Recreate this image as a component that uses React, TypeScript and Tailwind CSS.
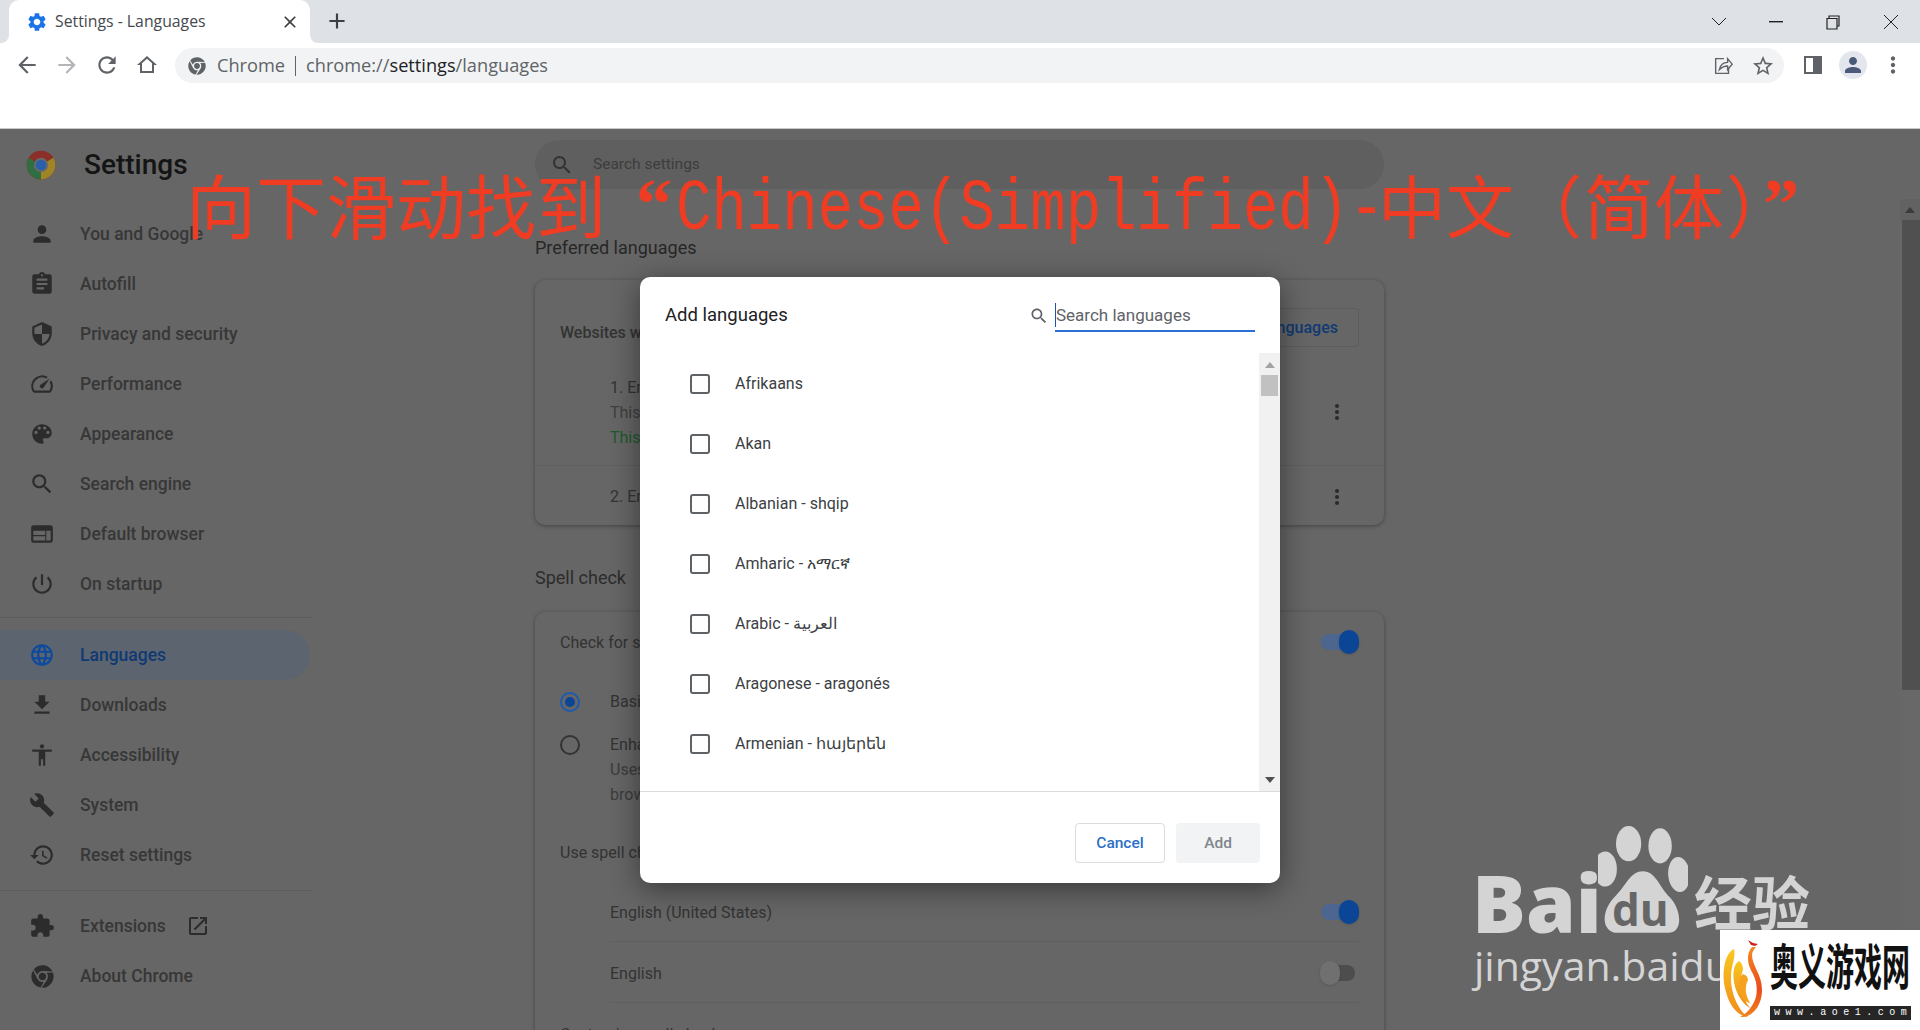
import { FaChrome } from "react-icons/fa";

const paths = {
  person: "M12 12c2.21 0 4-1.79 4-4s-1.79-4-4-4-4 1.79-4 4 1.79 4 4 4zm0 2c-2.67 0-8 1.34-8 4v2h16v-2c0-2.66-5.33-4-8-4z",
  assignment: "M19 3h-4.18C14.4 1.84 13.3 1 12 1c-1.3 0-2.4.84-2.82 2H5c-1.1 0-2 .9-2 2v14c0 1.1.9 2 2 2h14c1.1 0 2-.9 2-2V5c0-1.1-.9-2-2-2zm-7 0c.55 0 1 .45 1 1s-.45 1-1 1-1-.45-1-1 .45-1 1-1zm2 14H7v-2h7v2zm3-4H7v-2h10v2zm0-4H7V7h10v2z",
  security: "M12 1L3 5v6c0 5.55 3.84 10.74 9 12 5.16-1.26 9-6.45 9-12V5l-9-4zm0 10.99h7c-.53 4.12-3.28 7.79-7 8.94V12H5V6.3l7-3.11v8.8z",
  speed: "M20.38 8.57l-1.23 1.85a8 8 0 0 1-.22 7.58H5.07A8 8 0 0 1 15.58 6.85l1.85-1.23A10 10 0 0 0 3.35 19a2 2 0 0 0 1.72 1h13.85a2 2 0 0 0 1.74-1 10 10 0 0 0-.27-10.44zm-9.79 6.84a2 2 0 0 0 2.83 0l5.66-8.49-8.49 5.66a2 2 0 0 0 0 2.83z",
  palette: "M12 3c-4.97 0-9 4.03-9 9s4.03 9 9 9c.83 0 1.5-.67 1.5-1.5 0-.39-.15-.74-.39-1.01-.23-.26-.38-.61-.38-.99 0-.83.67-1.5 1.5-1.5H16c2.76 0 5-2.24 5-5 0-4.42-4.03-8-9-8zm-5.5 9c-.83 0-1.5-.67-1.5-1.5S5.67 9 6.5 9 8 9.67 8 10.5 7.33 12 6.5 12zm3-4C8.67 8 8 7.33 8 6.5S8.67 5 9.5 5s1.5.67 1.5 1.5S10.33 8 9.5 8zm5 0c-.83 0-1.5-.67-1.5-1.5S13.67 5 14.5 5s1.5.67 1.5 1.5S15.33 8 14.5 8zm3 4c-.83 0-1.5-.67-1.5-1.5S16.67 9 17.5 9s1.5.67 1.5 1.5-.67 1.5-1.5 1.5z",
  search: "M15.5 14h-.79l-.28-.27C15.41 12.59 16 11.11 16 9.5 16 5.91 13.09 3 9.5 3S3 5.91 3 9.5 5.91 16 9.5 16c1.61 0 3.09-.59 4.23-1.57l.27.28v.79l5 4.99L20.49 19l-4.99-5zm-6 0C7.01 14 5 11.99 5 9.5S7.01 5 9.5 5 14 7.01 14 9.5 11.99 14 9.5 14z",
  web: "M20 4H4c-1.1 0-1.99.9-1.99 2L2 18c0 1.1.9 2 2 2h16c1.1 0 2-.9 2-2V6c0-1.1-.9-2-2-2zm-5 14H4v-4h11v4zm0-5H4V9h11v4zm5 5h-4V9h4v9z",
  power: "M13 3h-2v10h2V3zm4.83 2.17l-1.42 1.42C17.99 7.86 19 9.81 19 12c0 3.87-3.13 7-7 7s-7-3.13-7-7c0-2.19 1.01-4.14 2.58-5.42L6.17 5.17C4.23 6.82 3 9.26 3 12c0 4.97 4.03 9 9 9s9-4.03 9-9c0-2.74-1.23-5.18-3.17-6.83z",
  language: "M11.99 2C6.47 2 2 6.48 2 12s4.47 10 9.99 10C17.52 22 22 17.52 22 12S17.52 2 11.99 2zm6.93 6h-2.95c-.32-1.25-.78-2.45-1.38-3.56 1.84.63 3.37 1.91 4.33 3.56zM12 4.04c.83 1.2 1.48 2.53 1.91 3.96h-3.82c.43-1.43 1.08-2.76 1.91-3.96zM4.26 14C4.1 13.36 4 12.69 4 12s.1-1.36.26-2h3.38c-.08.66-.14 1.32-.14 2 0 .68.06 1.34.14 2H4.26zm.82 2h2.95c.32 1.25.78 2.45 1.38 3.56-1.84-.63-3.37-1.9-4.33-3.56zm2.95-8H5.08c.96-1.66 2.49-2.93 4.33-3.56C8.81 5.55 8.35 6.75 8.03 8zM12 19.96c-.83-1.2-1.48-2.53-1.91-3.96h3.82c-.43 1.43-1.08 2.76-1.91 3.96zM14.34 14H9.66c-.09-.66-.16-1.32-.16-2 0-.68.07-1.35.16-2h4.68c.09.65.16 1.32.16 2 0 .68-.07 1.34-.16 2zm.25 5.56c.6-1.11 1.06-2.31 1.38-3.56h2.95c-.96 1.65-2.49 2.93-4.33 3.56zM16.36 14c.08-.66.14-1.32.14-2 0-.68-.06-1.34-.14-2h3.38c.16.64.26 1.31.26 2s-.1 1.36-.26 2h-3.38z",
  download: "M19 9h-4V3H9v6H5l7 7 7-7zM5 18v2h14v-2H5z",
  accessibility: "M12 2c1.1 0 2 .9 2 2s-.9 2-2 2-2-.9-2-2 .9-2 2-2zm9 7h-6v13h-2v-6h-2v6H9V9H3V7h18v2z",
  build: "M22.7 19l-9.1-9.1c.9-2.3.4-5-1.5-6.9-2-2-5-2.4-7.4-1.3L9 6 6 9 1.6 4.7C.4 7.1.9 10.1 2.9 12.1c1.9 1.9 4.6 2.4 6.9 1.5l9.1 9.1c.4.4 1 .4 1.4 0l2.3-2.3c.5-.4.5-1.1.1-1.4z",
  history: "M13 3c-4.97 0-9 4.03-9 9H1l3.89 3.89.07.14L9 12H6c0-3.87 3.13-7 7-7s7 3.13 7 7-3.13 7-7 7c-1.93 0-3.68-.79-4.94-2.06l-1.42 1.42C8.27 19.99 10.51 21 13 21c4.97 0 9-4.03 9-9s-4.03-9-9-9zm-1 5v5l4.28 2.54.72-1.21-3.5-2.08V8H12z",
  extension: "M20.5 11H19V7c0-1.1-.9-2-2-2h-4V3.5C13 2.12 11.88 1 10.5 1S8 2.12 8 3.5V5H4c-1.1 0-1.99.9-1.99 2v3.8H3.5c1.49 0 2.7 1.21 2.7 2.7s-1.21 2.7-2.7 2.7H2V20c0 1.1.9 2 2 2h3.8v-1.5c0-1.49 1.21-2.7 2.7-2.7 1.49 0 2.7 1.21 2.7 2.7V22H17c1.1 0 2-.9 2-2v-4h1.5c1.38 0 2.5-1.12 2.5-2.5S21.88 11 20.5 11z",
  openNew: "M19 19H5V5h7V3H5c-1.11 0-2 .9-2 2v14c0 1.1.89 2 2 2h14c1.1 0 2-.9 2-2v-7h-2v7zM14 3v2h3.59l-9.83 9.83 1.41 1.41L19 6.41V10h2V3h-7z",
  gear: "M19.14 12.94c.04-.3.06-.61.06-.94 0-.32-.02-.64-.07-.94l2.03-1.58c.18-.14.23-.41.12-.61l-1.92-3.32c-.12-.22-.37-.29-.59-.22l-2.39.96c-.5-.38-1.03-.7-1.62-.94l-.36-2.54c-.04-.24-.24-.41-.48-.41h-3.84c-.24 0-.43.17-.47.41l-.36 2.54c-.59.24-1.13.57-1.62.94l-2.39-.96c-.22-.08-.47 0-.59.22L2.74 8.87c-.12.21-.08.47.12.61l2.03 1.58c-.05.3-.09.63-.09.94s.02.64.07.94l-2.03 1.58c-.18.14-.23.41-.12.61l1.92 3.32c.12.22.37.29.59.22l2.39-.96c.5.38 1.03.7 1.62.94l.36 2.54c.05.24.24.41.48.41h3.84c.24 0 .44-.17.47-.41l.36-2.54c.59-.24 1.13-.56 1.62-.94l2.39.96c.22.08.47 0 .59-.22l1.92-3.32c.12-.22.07-.47-.12-.61l-2.01-1.58zM12 15.6c-1.98 0-3.6-1.62-3.6-3.6s1.62-3.6 3.6-3.6 3.6 1.62 3.6 3.6-1.62 3.6-3.6 3.6z",
  back: "M20 11H7.83l5.59-5.59L12 4l-8 8 8 8 1.41-1.41L7.83 13H20v-2z",
  forward: "M12 4l-1.41 1.41L16.17 11H4v2h12.17l-5.58 5.59L12 20l8-8z",
  refresh: "M17.65 6.35C16.2 4.9 14.21 4 12 4c-4.42 0-7.99 3.58-7.99 8s3.57 8 7.99 8c3.73 0 6.84-2.55 7.73-6h-2.08c-.82 2.33-3.04 4-5.65 4-3.31 0-6-2.69-6-6s2.69-6 6-6c1.66 0 3.14.69 4.22 1.78L13 11h7V4l-2.35 2.35z",
  home: "M12 5.69l5 4.5V18H7v-7.81l5-4.5M12 3L2 12h3v8h14v-8h3L12 3z",
  star: "M22 9.24l-7.19-.62L12 2 9.19 8.63 2 9.24l5.46 4.73L5.82 21 12 17.27 18.18 21l-1.63-7.03L22 9.24zM12 15.4l-3.76 2.27 1-4.28-3.32-2.88 4.38-.38L12 6.1l1.71 4.04 4.38.38-3.32 2.88 1 4.28L12 15.4z",
  plus: "M19 13h-6v6h-2v-6H5v-2h6V5h2v6h6v2z",
  close: "M19 6.41L17.59 5 12 10.59 6.41 5 5 6.41 10.59 12 5 17.59 6.41 19 12 13.41 17.59 19 19 17.59 13.41 12z",
  more: "M12 8c1.1 0 2-.9 2-2s-.9-2-2-2-2 .9-2 2 .9 2 2 2zm0 2c-1.1 0-2 .9-2 2s.9 2 2 2 2-.9 2-2-.9-2-2-2zm0 6c-1.1 0-2 .9-2 2s.9 2 2 2 2-.9 2-2-.9-2-2-2z",
};

function Icon({ d, className }: { d: string; className: string }) {
  return (
    <svg viewBox="0 0 24 24" className={className} fill="currentColor">
      <path d={d} />
    </svg>
  );
}

const navTop = [
  { label: "You and Google", d: paths.person },
  { label: "Autofill", d: paths.assignment },
  { label: "Privacy and security", d: paths.security },
  { label: "Performance", d: paths.speed },
  { label: "Appearance", d: paths.palette },
  { label: "Search engine", d: paths.search },
  { label: "Default browser", d: paths.web },
  { label: "On startup", d: paths.power },
];

const navBottom = [
  { label: "Downloads", d: paths.download },
  { label: "Accessibility", d: paths.accessibility },
  { label: "System", d: paths.build },
  { label: "Reset settings", d: paths.history },
];

const languages = [
  "Afrikaans",
  "Akan",
  "Albanian - shqip",
  "Amharic - አማርኛ",
  "Arabic - العربية",
  "Aragonese - aragonés",
  "Armenian - հայերեն",
];

function ChromeLogo() {
  return (
    <svg viewBox="0 0 48 48" className="h-[30px] w-[30px]">
      <circle cx="24" cy="24" r="23" fill="#8c2f28" />
      <path d="M24 24 L4.1 12.5 A23 23 0 0 0 24 47 Z" fill="#2f6f42" />
      <path d="M24 24 L24 47 A23 23 0 0 0 43.9 12.5 Z" fill="#a08526" />
      <circle cx="24" cy="24" r="11.5" fill="#6a6a6a" />
      <circle cx="24" cy="24" r="8.5" fill="#2b5fa8" />
    </svg>
  );
}

function NavRow({ label, d }: { label: string; d: string }) {
  return (
    <div className="flex h-[50px] items-center">
      <Icon d={d} className="ml-[29px] h-[26px] w-[26px] text-[#2c2c2c]" />
      <span className="ml-[25px] text-[17.5px] font-medium text-[#373737]">{label}</span>
    </div>
  );
}

function Toggle({ on }: { on: boolean }) {
  return on ? (
    <div className="relative h-[16px] w-[38px] rounded-full bg-[#4c668f]">
      <div className="absolute right-0 top-[-4px] h-[24px] w-[20px] rounded-full bg-[#0a4596] shadow" />
    </div>
  ) : (
    <div className="relative mr-[4px] h-[16px] w-[35px] rounded-full bg-[#4d4d4d]">
      <div className="absolute left-0 top-[-4px] h-[24px] w-[20px] rounded-full bg-[#707070] shadow" />
    </div>
  );
}

function Sidebar() {
  return (
    <aside className="w-[312px] shrink-0">
      <div className="flex h-[71px] items-center pl-[26px]">
        <ChromeLogo />
        <span className="ml-[28px] text-[28px] font-medium text-[#141414]">Settings</span>
      </div>
      <div className="mt-[9px]">
        {navTop.map((n) => (
          <NavRow key={n.label} {...n} />
        ))}
      </div>
      <div className="mt-[8px] h-px bg-[#5c5c5c]" />
      <div className="mt-[12px] flex h-[50px] w-[310px] items-center rounded-r-full bg-[#5c6470]">
        <Icon d={paths.language} className="ml-[29px] h-[26px] w-[26px] text-[#0d4a9e]" />
        <span className="ml-[25px] text-[17.5px] font-medium text-[#103a72]">Languages</span>
      </div>
      {navBottom.map((n) => (
        <NavRow key={n.label} {...n} />
      ))}
      <div className="mt-[10px] h-px bg-[#5c5c5c]" />
      <div className="mt-[10px] flex h-[50px] items-center">
        <Icon d={paths.extension} className="ml-[29px] h-[26px] w-[26px] text-[#2c2c2c]" />
        <span className="ml-[25px] text-[17.5px] font-medium text-[#373737]">Extensions</span>
        <Icon d={paths.openNew} className="ml-[20px] h-[24px] w-[24px] text-[#2c2c2c]" />
      </div>
      <div className="flex h-[50px] items-center">
        <FaChrome className="ml-[31px] h-[23px] w-[23px] text-[#2c2c2c]" />
        <span className="ml-[26px] text-[17.5px] font-medium text-[#373737]">About Chrome</span>
      </div>
    </aside>
  );
}

function MainColumn() {
  return (
    <main className="ml-[223px] w-[849px] shrink-0 pt-[11px] text-[16px] text-[#333]">
      <div className="flex h-[49px] items-center rounded-full bg-[#5f5f5f] pl-[15px]">
        <Icon d={paths.search} className="h-[24px] w-[24px] text-[#333]" />
        <span className="ml-[19px] text-[15.5px] text-[#3c3c3c]">Search settings</span>
      </div>
      <h2 className="mt-[47px] h-[24px] text-[18px] leading-[24px] text-[#262626]">Preferred languages</h2>
      <section className="mt-[20px] h-[245px] rounded-[10px] bg-[#666] shadow-[0_1px_4px_rgba(0,0,0,0.35)]">
        <div className="flex h-[96px] items-start justify-between px-[25px] pt-[28px]">
          <span className="mt-[13px] font-medium">Websites will use</span>
          <div className="flex h-[39px] w-[160px] items-center justify-end rounded-[4px] border border-[#5c5c5c] pr-[20px] text-[16px] font-medium text-[#103a72]">
            Add languages
          </div>
        </div>
        <div className="flex h-[90px] border-b border-[#5f5f5f] pl-[75px] pr-[25px]">
          <div className="-mt-px flex-1 leading-[25px] text-[#3f3f3f]">
            <div className="text-[#333]">1. English (United States)</div>
            <div>This language is used</div>
            <div className="text-[#1e5a2c]">This language is used</div>
          </div>
          <Icon d={paths.more} className="mr-[10px] mt-[24px] h-[24px] w-[24px] text-[#2a2a2a]" />
        </div>
        <div className="flex h-[59px] items-center pl-[75px] pr-[25px] pt-[3px]">
          <div className="flex-1 text-[#333]">2. English</div>
          <Icon d={paths.more} className="mr-[10px] h-[24px] w-[24px] text-[#2a2a2a]" />
        </div>
      </section>
      <h2 className="mt-[41px] h-[24px] text-[18px] leading-[24px] text-[#2c2c2c]">Spell check</h2>
      <section className="mt-[22px] rounded-t-[10px] bg-[#666] shadow-[0_1px_4px_rgba(0,0,0,0.35)]">
        <div className="flex h-[60px] items-center justify-between px-[25px]">
          <span className="pt-[2px]">Check for spelling</span>
          <Toggle on />
        </div>
        <div className="mt-[10px] flex h-[40px] items-center pl-[25px]">
          <div className="flex h-[20px] w-[20px] items-center justify-center rounded-full border-2 border-[#1c5bb0]">
            <div className="h-[10px] w-[10px] rounded-full bg-[#0a4596]" />
          </div>
          <span className="ml-[30px]">Basic spell check</span>
        </div>
        <div className="mt-[10px] flex pl-[25px] leading-[25px]">
          <div className="mt-[3px] h-[20px] w-[20px] rounded-full border-2 border-[#333]" />
          <div className="ml-[30px] text-[#3c3c3c]">
            <div className="text-[#333]">Enhanced spell check</div>
            <div>Uses the same</div>
            <div>browser</div>
          </div>
        </div>
        <div className="mt-[33px] h-[25px] pl-[25px] leading-[25px]">Use spell check for</div>
        <div className="ml-[75px] mr-[25px] mt-[17px] flex h-[60px] items-center justify-between border-b border-[#5f5f5f]">
          <span className="pt-[2px]">English (United States)</span>
          <Toggle on />
        </div>
        <div className="ml-[75px] mr-[25px] flex h-[61px] items-center justify-between border-b border-[#5f5f5f] pt-[2px]">
          <span className="pt-[2px]">English</span>
          <Toggle on={false} />
        </div>
        <div className="mt-[20px] pl-[25px]">Customize spell check</div>
      </section>
    </main>
  );
}

function AddLanguagesDialog() {
  return (
    <div className="absolute left-[640px] top-[277px] flex h-[606px] w-[640px] flex-col overflow-hidden rounded-[10px] bg-white shadow-[0_6px_30px_rgba(0,0,0,0.45)]">
      <div className="flex h-[76px] shrink-0 items-center justify-between pl-[25px] pr-[25px]">
        <span className="pt-[2px] text-[18.5px] text-[#202124]">Add languages</span>
        <div className="flex items-center">
          <Icon d={paths.search} className="mr-[6px] mt-[2px] h-[20px] w-[20px] text-[#5f6368]" />
          <div className="flex h-[33px] w-[200px] items-center border-b-2 border-[#2a6fd6] pt-px text-[17px] text-[#5f6368]">
            <span className="h-[24px] border-l border-[#1a56b0] leading-[24px]">Search languages</span>
          </div>
        </div>
      </div>
      <div className="flex min-h-0 flex-1">
        <ul className="flex-1 pt-px">
          {languages.map((l) => (
            <li key={l} className="flex h-[60px] items-center pl-[50px]">
              <div className="h-[20px] w-[20px] rounded-[3px] border-2 border-[#5f6368]" />
              <span className="ml-[25px] text-[16px] text-[#3c4043]">{l}</span>
            </li>
          ))}
        </ul>
        <div className="flex w-[21px] flex-col bg-[#f1f1f1]">
          <div className="flex h-[22px] items-center justify-center pt-[2px]">
            <svg viewBox="0 0 10 6" className="h-[6px] w-[10px]" fill="#a3a3a3"><path d="M5 0l5 6H0z" /></svg>
          </div>
          <div className="mx-[2px] h-[21px] bg-[#c1c1c1]" />
          <div className="flex-1" />
          <div className="flex h-[22px] items-center justify-center">
            <svg viewBox="0 0 10 6" className="h-[6px] w-[10px]" fill="#505050"><path d="M0 0h10L5 6z" /></svg>
          </div>
        </div>
      </div>
      <div className="flex h-[92px] shrink-0 items-start justify-end gap-[11px] border-t border-[#dadce0] pr-[20px] pt-[31px]">
        <div className="flex h-[40px] w-[90px] items-center justify-center rounded-[4px] border border-[#dadce0] pt-[2px] text-[15.5px] font-medium text-[#2a6fc9]">Cancel</div>
        <div className="flex h-[40px] w-[84px] items-center justify-center rounded-[4px] bg-[#f1f3f4] pt-[2px] text-[15.5px] font-medium text-[#80868b]">Add</div>
      </div>
    </div>
  );
}

function Caption() {
  return (
    <div className="absolute left-[186px] top-[164px] flex h-[80px] items-center whitespace-nowrap text-[#f03c22]">
      <span className="w-[450px] shrink-0 font-['Noto_Sans_CJK_SC',sans-serif] text-[70px] leading-[80px]">向下滑动找到</span>
      <span className="w-[40px] shrink-0 font-['Liberation_Serif',serif] text-[72px] font-bold leading-[80px]">“</span>
      <span className="mt-[12px] w-[702px] shrink-0 font-['Liberation_Mono',monospace] text-[72px] leading-[80px]">
        <span className="inline-block origin-left scale-x-[0.82]">Chinese(Simplified)-</span>
      </span>
      <span className="w-[136px] shrink-0 font-['Noto_Sans_CJK_SC',sans-serif] text-[68px] leading-[80px]">中文</span>
      <span className="w-[70px] shrink-0 font-['Noto_Sans_CJK_SC',sans-serif] text-[68px] leading-[80px]">（</span>
      <span className="w-[142px] shrink-0 font-['Noto_Sans_CJK_SC',sans-serif] text-[70px] leading-[80px]">简体</span>
      <span className="w-[37px] shrink-0 font-['Noto_Sans_CJK_SC',sans-serif] text-[68px] leading-[80px]">）</span>
      <span className="font-['Liberation_Serif',serif] text-[72px] font-bold leading-[80px]">”</span>
    </div>
  );
}

function Watermark() {
  return (
    <>
      <svg viewBox="0 0 100 100" className="absolute left-[1598px] top-[825px] h-[110px] w-[90px]" preserveAspectRatio="none" fill="#d4d4d4">
        <ellipse cx="34" cy="17" rx="14" ry="16" />
        <ellipse cx="69" cy="19" rx="13" ry="16" />
        <ellipse cx="8" cy="40" rx="13" ry="16" />
        <ellipse cx="90" cy="45" rx="12" ry="16" transform="rotate(-8 90 45)" />
        <path d="M50 42c14 0 18 14 30 24 12 10 16 32-2 32H22C4 98 2 78 20 64 32 54 36 42 50 42z" />
      </svg>
      <span className="absolute left-[1472px] top-[862px] font-['Open_Sans',sans-serif] text-[80px] font-extrabold leading-[80px] text-[#d4d4d4]">Bai</span>
      <span className="absolute left-[1612px] top-[884px] font-['Open_Sans',sans-serif] text-[44px] font-bold leading-[50px] text-[#666]">du</span>
      <span className="absolute left-[1694px] top-[860px] font-['Noto_Sans_CJK_SC',sans-serif] text-[58px] font-bold leading-[80px] text-[#d4d4d4]">经验</span>
      <span className="absolute left-[1474px] top-[935px] font-['Open_Sans',sans-serif] text-[41px] font-medium leading-[60px] text-[#d4d4d4]">jingyan.baidu.com</span>
      <div className="absolute left-[1720px] top-[930px] flex h-[100px] w-[200px] bg-white">
        <svg viewBox="0 0 50 100" className="h-[100px] w-[50px] shrink-0">
          <defs>
            <linearGradient id="aoeLeft" x1="0" y1="0" x2="0" y2="1">
              <stop offset="0" stopColor="#f8c81f" />
              <stop offset="1" stopColor="#f28a1c" />
            </linearGradient>
            <linearGradient id="aoeRight" x1="0" y1="0" x2="0" y2="1">
              <stop offset="0" stopColor="#f58a22" />
              <stop offset="0.6" stopColor="#ea4a1c" />
              <stop offset="1" stopColor="#f0841e" />
            </linearGradient>
          </defs>
          <path d="M28 10l5 3 5 1-3 2-4-1z" fill="#d4201c" />
          <path d="M14 19C4 24 1 45 6 62c4 16 14 25 22 25-10-7-18-25-17-42 1-12 5-19 3-26z" fill="url(#aoeLeft)" />
          <path d="M19 31c-7 4-7 19-2 31 3 8 9 14 13 16-8-10-12-26-7-38 0-4-1-7-4-9z" fill="url(#aoeLeft)" />
          <path d="M23 44c-5 4-5 14-1 22 2 5 6 7 8 7-4-7-6-15-2-23 0-3-2-5-5-6z" fill="#f6a21f" />
          <path d="M32 17c-6 7-5 17 1 27 5 10 5 22 0 30-4 7-9 11-13 13 12 1 22-11 22-27 0-16-10-24-10-35 0-3 2-6 4-8z" fill="url(#aoeRight)" />
        </svg>
        <div className="w-[141px]">
          <div className="mt-[3px] flex h-[62px] items-center overflow-hidden font-['Noto_Sans_CJK_SC',sans-serif] text-[28px] font-bold leading-[28px] text-[#111]">
            <span className="inline-block scale-y-[1.75]">奥义游戏网</span>
          </div>
          <div className="mt-[11px] flex h-[14px] items-center justify-between bg-[#262626] px-[4px] font-['Liberation_Mono',monospace] text-[10px] leading-[14px] text-white">
            {"www.aoe1.com".split("").map((c, i) => (
              <span key={i}>{c}</span>
            ))}
          </div>
        </div>
      </div>
    </>
  );
}

export default function App() {
  return (
    <div className="relative flex h-[1030px] w-[1920px] flex-col overflow-hidden bg-white font-['Roboto','Noto_Sans_CJK_SC',sans-serif]">
      <div className="flex h-[43px] shrink-0 items-end bg-[#dee1e6] pl-[9px]">
        <div className="relative flex h-[43px] w-[301px] items-center rounded-t-[10px] bg-white pl-[17px] pr-[10px] font-['Open_Sans',sans-serif]">
          <span className="absolute -left-2 bottom-0 h-2 w-2 bg-white"><span className="block h-2 w-2 rounded-br-lg bg-[#dee1e6]" /></span>
          <span className="absolute -right-2 bottom-0 h-2 w-2 bg-white"><span className="block h-2 w-2 rounded-bl-lg bg-[#dee1e6]" /></span>
          <Icon d={paths.gear} className="h-[22px] w-[22px] text-[#1a73e8]" />
          <span className="ml-[7px] flex-1 text-[15.8px] text-[#45494e]">Settings - Languages</span>
          <Icon d={paths.close} className="h-[20px] w-[20px] text-[#3c4043]" />
        </div>
        <Icon d={paths.plus} className="mb-[9px] ml-[14px] h-[26px] w-[26px] text-[#3c4043]" />
        <div className="flex-1" />
        <div className="mb-[13px] flex items-center text-[#222]">
          <svg viewBox="0 0 16 10" className="mr-[42px] h-[10px] w-[16px]" fill="none" stroke="currentColor"><path d="M1 1l7 7 7-7" /></svg>
          <svg viewBox="0 0 14 2" className="mr-[43px] h-[2px] w-[14px]" fill="currentColor"><rect width="14" height="1.4" /></svg>
          <svg viewBox="0 0 14 15" className="mr-[43px] h-[15px] w-[14px]" fill="none" stroke="currentColor" strokeWidth="1.2"><path d="M3 3V1h10v10h-2M1 3.5h10v10.5H1z" /></svg>
          <svg viewBox="0 0 16 16" className="mr-[21px] h-[16px] w-[16px]" fill="none" stroke="currentColor"><path d="M1 1l14 14M15 1L1 15" /></svg>
        </div>
      </div>
      <div className="flex h-[86px] shrink-0 items-start border-b border-[#c9c9c9] pt-[5px]">
        <Icon d={paths.back} className="ml-[14px] mt-[4px] h-[26px] w-[26px] text-[#5f6368]" />
        <Icon d={paths.forward} className="ml-[14px] mt-[4px] h-[26px] w-[26px] text-[#b3b5b8]" />
        <Icon d={paths.refresh} className="ml-[14px] mt-[4px] h-[26px] w-[26px] text-[#5f6368]" />
        <Icon d={paths.home} className="ml-[15px] mt-[5px] h-[24px] w-[24px] text-[#5f6368]" />
        <div className="ml-[16px] flex h-[35px] w-[1609px] items-center rounded-full bg-[#f1f3f4] pl-[13px] pr-[9px] font-['Open_Sans',sans-serif] text-[18.2px] text-[#5f6368]">
          <FaChrome className="h-[18px] w-[18px] text-[#5f6368]" />
          <span className="ml-[11px]">Chrome</span>
          <span className="ml-[10px] h-[20px] w-px bg-[#5f6368]" />
          <span className="ml-[10px] flex-1">
            chrome://<span className="text-[#202124]">settings</span>/languages
          </span>
          <svg viewBox="0 0 24 24" className="mr-[17px] h-[22px] w-[22px]" fill="none" stroke="#5f6368" strokeWidth="1.5">
            <path d="M13 4h-9v16h14v-6" />
            <path d="M8 16c1-5 4-8 9-8V4l5 6-5 6v-4c-4 0-6 1-9 4z" />
          </svg>
          <Icon d={paths.star} className="h-[24px] w-[24px] text-[#5f6368]" />
        </div>
        <div className="ml-[20px] mt-[8px] flex h-[18px] w-[18px] justify-end border-[2px] border-[#5f6368] bg-white">
          <div className="h-full w-[7px] bg-[#5f6368]" />
        </div>
        <div className="ml-[17px] mt-[3px] flex h-[28px] w-[28px] items-center justify-center rounded-full bg-[#e3e6ec]">
          <Icon d={paths.person} className="h-[24px] w-[24px] text-[#4a5a78]" />
        </div>
        <Icon d={paths.more} className="ml-[13px] mt-[4px] h-[26px] w-[26px] text-[#5f6368]" />
      </div>
      <div className="flex min-h-0 flex-1 bg-[#666]">
        <Sidebar />
        <MainColumn />
        <div className="flex-1" />
        <div className="mt-[70px] flex w-[20px] shrink-0 flex-col bg-[#686868]">
          <div className="flex h-[21px] items-center justify-center bg-[#626262]">
            <svg viewBox="0 0 10 6" className="h-[6px] w-[10px]" fill="#3a3a3a"><path d="M5 0l5 6H0z" /></svg>
          </div>
          <div className="ml-[2px] h-[470px] bg-[#505050]" />
        </div>
      </div>
      <Watermark />
      <AddLanguagesDialog />
      <Caption />
    </div>
  );
}
